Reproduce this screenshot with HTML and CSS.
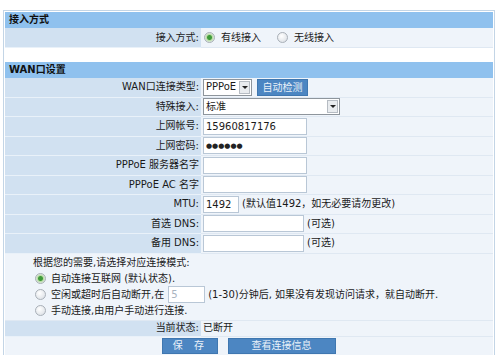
FILE: index.html
```html
<!DOCTYPE html>
<html lang="zh-CN">
<head>
    <meta charset="UTF-8">
    <title>WAN口设置</title>
    <link rel="stylesheet" href="styles.css">
</head>
<body>
    <div class="panel">
        <div class="bar">接入方式</div>
        <table class="form">
            <tr class="first">
                <td class="label">接入方式:</td>
                <td class="value">
                    <div class="cell">
                        <span class="radio on"></span><span class="opt">有线接入</span>
                        <span class="radio"></span><span class="opt">无线接入</span>
                    </div>
                </td>
            </tr>
        </table>

        <div class="gap"></div>

        <div class="bar">WAN口设置</div>
        <table class="form">
            <tr>
                <td class="label">WAN口连接类型:</td>
                <td class="value">
                    <div class="cell">
                        <span class="select small">PPPoE<span class="arrow"></span></span>
                        <button class="btn detect">自动检测</button>
                    </div>
                </td>
            </tr>
            <tr>
                <td class="label">特殊接入:</td>
                <td class="value"><div class="cell"><span class="select wide">标准<span class="arrow"></span></span></div></td>
            </tr>
            <tr>
                <td class="label">上网帐号:</td>
                <td class="value"><div class="cell"><input class="field" type="text" value="15960817176"></div></td>
            </tr>
            <tr>
                <td class="label">上网密码:</td>
                <td class="value"><div class="cell"><input class="field pass" type="text" value="●●●●●●"></div></td>
            </tr>
            <tr>
                <td class="label">PPPoE 服务器名字</td>
                <td class="value"><div class="cell"><input class="field" type="text"></div></td>
            </tr>
            <tr>
                <td class="label">PPPoE AC 名字</td>
                <td class="value"><div class="cell"><input class="field" type="text"></div></td>
            </tr>
            <tr>
                <td class="label">MTU:</td>
                <td class="value"><div class="cell"><input class="field mtu" type="text" value="1492"><span class="note">(默认值1492，如无必要请勿更改)</span></div></td>
            </tr>
            <tr>
                <td class="label">首选 DNS:</td>
                <td class="value"><div class="cell"><input class="field dns" type="text"><span class="note">(可选)</span></div></td>
            </tr>
            <tr>
                <td class="label">备用 DNS:</td>
                <td class="value"><div class="cell"><input class="field dns" type="text"><span class="note">(可选)</span></div></td>
            </tr>
            <tr>
                <td class="modes" colspan="2">
                    <div class="hint">根据您的需要,请选择对应连接模式:</div>
                    <div class="mode"><span class="radio on"></span>自动连接互联网 (默认状态).</div>
                    <div class="mode"><span class="radio"></span>空闲或超时后自动断开,在<input class="field idle" type="text" value="5"><span class="note">(1-30)分钟后, 如果没有发现访问请求，就自动断开.</span></div>
                    <div class="mode"><span class="radio"></span>手动连接,由用户手动进行连接.</div>
                </td>
            </tr>
            <tr class="status">
                <td class="label">当前状态:</td>
                <td class="value"><div class="cell">已断开</div></td>
            </tr>
            <tr>
                <td class="actions" colspan="2">
                    <button class="btn big">保 存</button>
                    <button class="btn bigger">查看连接信息</button>
                </td>
            </tr>
        </table>
    </div>
</body>
</html>
```

FILE: styles.css
```css
body {
    margin: 0;
    background: #fff;
    font-family: 'DejaVu Sans', 'Noto Sans CJK SC', sans-serif;
    font-size: 10px;
    color: #1a1a1a;
}
.panel {
    margin: 10px 0 0 3px;
    width: 488px;
    padding: 1px;
    border: 1px solid #c3d5e6;
    border-bottom: none;
}
.bar {
    height: 16px;
    line-height: 16px;
    padding-left: 4px;
    background: #8fc1ee;
    font-weight: bold;
    color: #111;
}
.gap {
    height: 14px;
}
.form {
    width: 100%;
    border-collapse: collapse;
}
.form td {
    padding: 0;
    line-height: 14px;
    border-bottom: 1px solid #dfe8f2;
}
.label {
    width: 194px;
    padding-right: 2px !important;
    text-align: right;
    background: #d1e1f1;
    border-bottom-color: #e9f1f9 !important;
}
.value {
    padding-left: 2px !important;
    background: #eff4fa;
}
.cell {
    display: flex;
    align-items: center;
    height: 18.5px;
    white-space: nowrap;
}
.first .cell {
    height: 19px;
}
.status .cell {
    height: 15px;
}
.radio {
    display: inline-block;
    flex: none;
    width: 9px;
    height: 9px;
    margin: 0 6px 0 1px;
    border: 1px solid #a9b0b8;
    border-radius: 50%;
    background: radial-gradient(circle at 40% 35%, #ffffff, #d6dbe1);
}
.radio.on {
    background: radial-gradient(circle, #3f9b3a 0 2px, #b9dca6 3px, #e8ecef 5px);
}
.opt {
    margin-right: 15px;
}
.select {
    display: inline-flex;
    align-items: center;
    justify-content: space-between;
    height: 15px;
    padding-left: 2px;
    border: 1px solid #8e959c;
    background: #fff;
}
.select.small {
    width: 45px;
}
.select.wide {
    width: 133px;
}
.arrow {
    width: 11px;
    height: 13px;
    margin-right: 1px;
    border: 1px solid #b6bcc3;
    box-sizing: border-box;
    background: #e9ecef;
    position: relative;
}
.arrow::after {
    content: "";
    position: absolute;
    left: 2px;
    top: 4px;
    border-left: 3px solid transparent;
    border-right: 3px solid transparent;
    border-top: 3px solid #222;
}
.btn {
    font-family: inherit;
    font-size: 10px;
    color: #e9f1f9;
    background: #4c86c2;
    border: 1px solid #3f77b0;
    padding: 0;
    height: 17px;
    line-height: 15px;
    vertical-align: middle;
    cursor: pointer;
}
.btn.detect {
    width: 51px;
    margin-left: 5px;
}
.field {
    font-family: inherit;
    font-size: 10px;
    color: #1a1a1a;
    width: 104px;
    height: 17px;
    box-sizing: border-box;
    padding: 0 2px;
    border: 1px solid #b9c7d6;
    background: #fff;
}
.field.pass {
    font-size: 7px;
    color: #222;
}
.field.mtu {
    width: 36px;
}
.field.dns {
    width: 101px;
}
.field.idle {
    width: 37px;
    margin-left: 4px;
    color: #aab4bf;
}
.note {
    margin-left: 3px;
}
.modes {
    background: #eff4fa;
    padding: 1px 0 1px 27px !important;
    white-space: nowrap;
}
.mode, .hint {
    display: flex;
    align-items: center;
    height: 16px;
}
.hint {
    padding-left: 1px;
}
.mode .radio {
    margin: 0 5px 0 3px;
}
.actions {
    background: #eff4fa;
    text-align: center;
    height: 19px;
    vertical-align: top;
    padding-top: 1px !important;
}
.btn.big,
.btn.bigger {
    height: 16px;
    line-height: 14px;
}
.btn.big {
    width: 56px;
    margin-right: 6px;
    letter-spacing: 4px;
}
.btn.bigger {
    width: 108px;
}
```
